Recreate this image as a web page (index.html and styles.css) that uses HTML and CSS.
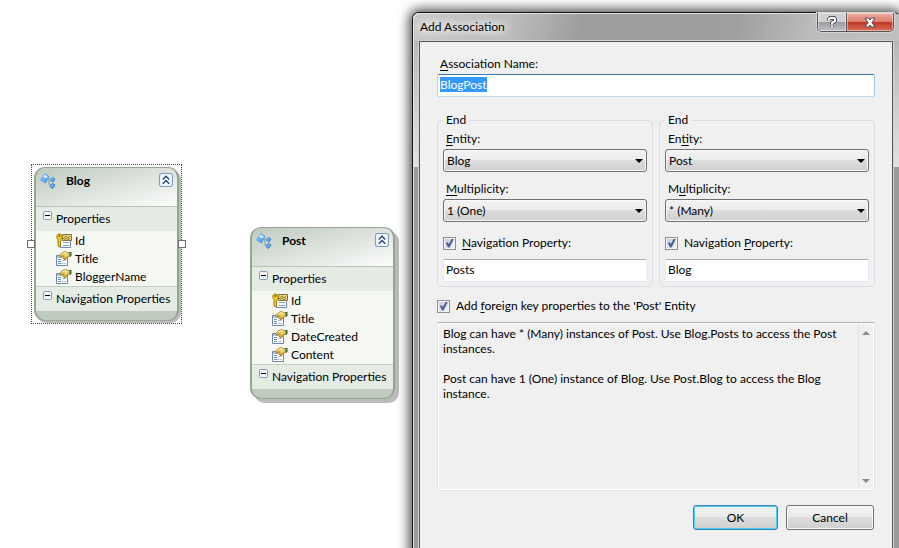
FILE: index.html
```html
<!DOCTYPE html>
<html lang="en">
<head>
<meta charset="utf-8">
<title>Add Association</title>
<link rel="stylesheet" href="styles.css">
</head>
<body>
<svg class="defs" aria-hidden="true">
  <defs>
    <linearGradient id="blue" x1="0" y1="0" x2="1" y2="1">
      <stop offset="0" stop-color="#a8d8ff"/><stop offset="1" stop-color="#2f86e0"/>
    </linearGradient>
    <linearGradient id="gold" x1="0" y1="0" x2="0" y2="1">
      <stop offset="0" stop-color="#fbe58a"/><stop offset="1" stop-color="#c79a1c"/>
    </linearGradient>
  </defs>
  <symbol id="entity" viewBox="0 0 16 16">
    <path d="M7 6h4M9 6v6h2" fill="none" stroke="#8a97a8"/>
    <path d="M5 .5l4 3-3.500 6.500L.5 7z" fill="url(#blue)" stroke="#4f9fee" stroke-width=".8"/>
    <path d="M5 1.500l3 2.500-2 1.500-3-2z" fill="#d3ecff"/>
    <path d="M12.500 4.500l2.500 1.500-2 3-2.500-1.500z" fill="url(#blue)" stroke="#2f7fd0" stroke-width=".9"/>
    <path d="M12.500 10.500l2.500 1.500-2.500 3.500-2.500-2z" fill="url(#blue)" stroke="#2472c4" stroke-width=".9"/>
  </symbol>
  <symbol id="prop" viewBox="0 0 16 16">
    <path d="M.5 4.500h11v10H.5z" fill="#fff" stroke="#7186ac"/>
    <path d="M1 5h5v2H1z" fill="#a9bfe4"/>
    <path d="M2 8.500h3M2 10.500h3M2 12.500h3" stroke="#6c8cc8"/>
    <path d="M6 9.500h4M6 12.500h4" stroke="#b5c1d8"/>
    <path d="M3.500 4.500l3-3 3-1 2 1h3v4h-2l-3 3H8L7 7.500l-1-1 1.500-1.500H6L4.500 6z" fill="url(#gold)" stroke="#866613" stroke-width=".7"/>
    <path d="M6.500 2.500l3-1 1.500 1M9 4l2 1" fill="none" stroke="#fff3b0" stroke-width=".9"/>
    <path d="M13.500 1h2v4h-2z" fill="#3c6b3c"/>
  </symbol>
  <symbol id="key" viewBox="0 0 16 16">
    <path d="M4.500 4.500h10v10h-10z" fill="#fff" stroke="#7186ac"/>
    <path d="M7 9.500h6M7 12.500h6" stroke="#7e9bd0"/>
    <path d="M6.500 1.500h9v6h-9z" fill="#e8d382" stroke="#85743a"/>
    <path d="M7 6l3-3 2 2 2-2M8 7l2-2 2 2 2-2" fill="none" stroke="#8a6812" stroke-width=".8"/>
    <path d="M3.500.8a3 3 0 0 1 1.500 5.500V8L4 9l1 1-1 1 1 1-1.500 2L2 13V6.300A3 3 0 0 1 3.500.8z" fill="#f2cf1d" stroke="#8d6a00" stroke-width=".8"/>
    <circle cx="3.500" cy="3" r=".9" fill="#6a4e00"/>
  </symbol>
  <symbol id="minus" viewBox="0 0 9 9">
    <rect x=".5" y=".5" width="8" height="8" rx="1" fill="#f3f6f8" stroke="#7f9db9"/>
    <path d="M2 4.500h5" stroke="#000"/>
  </symbol>
  <symbol id="chevrons" viewBox="0 0 13 13">
    <rect x=".5" y=".5" width="12" height="12" rx="2" fill="#f4f8fc" stroke="#7b9cc0"/>
    <path d="M3.500 6l3-3 3 3M3.500 10l3-3 3 3" fill="none" stroke="#1c3f78" stroke-width="1.200"/>
  </symbol>
</svg>

<main class="canvas">
  <article class="entity blog selected">
    <div class="card">
      <header><svg class="i16"><use href="#entity"/></svg><h2>Blog</h2><button aria-label="Collapse Blog"><svg><use href="#chevrons"/></svg></button></header>
      <h3><svg><use href="#minus"/></svg>Properties</h3>
      <ul>
        <li><svg class="i16"><use href="#key"/></svg>Id</li>
        <li><svg class="i16"><use href="#prop"/></svg>Title</li>
        <li><svg class="i16"><use href="#prop"/></svg>BloggerName</li>
      </ul>
      <h3 class="nav"><svg><use href="#minus"/></svg>Navigation Properties</h3>
    </div>
    <span class="handle left"></span><span class="handle right"></span>
  </article>

  <article class="entity post">
    <div class="card">
      <header><svg class="i16"><use href="#entity"/></svg><h2>Post</h2><button aria-label="Collapse Post"><svg><use href="#chevrons"/></svg></button></header>
      <h3><svg><use href="#minus"/></svg>Properties</h3>
      <ul>
        <li><svg class="i16"><use href="#key"/></svg>Id</li>
        <li><svg class="i16"><use href="#prop"/></svg>Title</li>
        <li><svg class="i16"><use href="#prop"/></svg>DateCreated</li>
        <li><svg class="i16"><use href="#prop"/></svg>Content</li>
      </ul>
      <h3 class="nav"><svg><use href="#minus"/></svg>Navigation Properties</h3>
    </div>
  </article>

  <section class="dialog" role="dialog" aria-labelledby="dialog-title">
    <header class="titlebar">
      <h1 id="dialog-title">Add Association</h1>
      <div class="caption">
        <button class="help" aria-label="Help"><svg viewBox="0 0 10 12"><path d="M2 4.500V3l1-1h4l1 1v2L5 7v1.200M5 9.200v1.800" fill="none" stroke="#4a4e5c" stroke-width="3.800"/><path d="M2 4.500V3l1-1h4l1 1v2L5 7v1.200M5 9.200v1.800" fill="none" stroke="#fff" stroke-width="2"/></svg></button>
        <button class="close" aria-label="Close"><svg viewBox="0 0 12 11"><path d="M1 1h3.500L6 3l1.500-2H11L8 5.500l3 4.500H7.500L6 8l-1.500 2H1l3-4.500z" fill="#fff" stroke="#4a4658"/></svg></button>
      </div>
    </header>
    <form class="client" onsubmit="return false">
      <label class="caption-text" for="name"><u>A</u>ssociation Name:</label>
      <input class="text focus" id="name" type="text" value="BlogPost" autofocus>

      <div class="ends">
        <fieldset>
          <legend>End</legend>
          <label class="caption-text" for="entity1"><u>E</u>ntity:</label>
          <div class="combo"><select id="entity1"><option>Blog</option><option>Post</option></select></div>
          <label class="caption-text second" for="mult1"><u>M</u>ultiplicity:</label>
          <div class="combo"><select id="mult1"><option>1 (One)</option><option>* (Many)</option></select></div>
          <label class="check"><input type="checkbox" checked><span><u>N</u>avigation Property:</span></label>
          <input class="text" type="text" value="Posts" aria-label="Navigation property name">
        </fieldset>
        <fieldset>
          <legend>End</legend>
          <label class="caption-text" for="entity2">En<u>t</u>ity:</label>
          <div class="combo"><select id="entity2"><option>Post</option><option>Blog</option></select></div>
          <label class="caption-text second" for="mult2">M<u>u</u>ltiplicity:</label>
          <div class="combo"><select id="mult2"><option>* (Many)</option><option>1 (One)</option></select></div>
          <label class="check"><input type="checkbox" checked><span>Navigation <u>P</u>roperty:</span></label>
          <input class="text" type="text" value="Blog" aria-label="Navigation property name">
        </fieldset>
      </div>

      <label class="check foreign"><input type="checkbox" checked><span>Add <u>f</u>oreign key properties to the 'Post' Entity</span></label>

      <div class="summary">
        <textarea readonly aria-label="Summary">Blog can have * (Many) instances of Post. Use Blog.Posts to access the Post instances.

Post can have 1 (One) instance of Blog. Use Post.Blog to access the Blog instance.</textarea>
        <div class="scroll"><button type="button" class="up" aria-label="Scroll up"></button><button type="button" class="down" aria-label="Scroll down"></button></div>
      </div>

      <div class="actions">
        <button class="push default">OK</button>
        <button class="push" type="button">Cancel</button>
      </div>
    </form>
  </section>
</main>
<script>document.getElementById("name").select();</script>
</body>
</html>
```
FILE: styles.css
```css
* { box-sizing: border-box; }

body {
  margin: 0;
  background: #fff;
  color: #000;
  font: 12px/16px Lato, "Open Sans", sans-serif;
}

button, input, select, textarea { font: inherit; color: inherit; margin: 0; }
button { padding: 0; }
h1, h2, h3, ul { margin: 0; padding: 0; font-size: inherit; font-weight: normal; list-style: none; }
svg { display: block; flex: none; }
u { text-underline-offset: 2px; }
.defs { position: absolute; width: 0; height: 0; }
.canvas { position: relative; min-height: 100vh; overflow: hidden; }

/* Entities on the designer surface */
.entity { position: absolute; }
.blog { left: 31px; top: 164px; }
.post { left: 250px; top: 227px; }
.selected { padding: 2px; border: 1px dotted #444; width: 151px; }
.selected .card { box-shadow: 2px 2px 0 #bcbcbc; }
.card {
  width: 145px;
  border: 2px solid #93a690;
  border-width: 1px 2px;
  border-radius: 11px;
  background: #c0cbbf;
  box-shadow: 4px 4px 0 #bcbcbc;
  overflow: hidden;
  padding-bottom: 9px;
}
.card header {
  display: flex;
  align-items: flex-start;
  height: 39px;
  padding: 5px 4px 0 4px;
  border-bottom: 1px solid #b5c3b4;
  background: linear-gradient(165deg, #bfcbbf 0%, #dfe5df 55%, #fcfdfc 100%);
}
.card h2 { flex: 1; padding-left: 10px; font-weight: bold; }
.card header button { border: 0; background: none; }
.card header button svg { width: 14px; height: 14px; }
.i16 { width: 16px; height: 16px; }
.card h3 {
  display: flex;
  gap: 4px;
  height: 24px;
  padding: 4px 0 0 7px;
  background: #e4ece4;
  white-space: nowrap;
}
.card h3 svg { width: 9px; height: 9px; }
.card .nav { height: 25px; border-top: 1px solid #c3cec3; }
.card ul { padding-top: 1px; background: #f4f7f2; }
.card li { display: flex; align-items: center; gap: 3px; height: 18px; padding-left: 20px; }
.handle { position: absolute; top: 75px; width: 8px; height: 8px; border: 1px solid #707070; background: #fff; }
.handle.left { left: -5px; }
.handle.right { right: -5px; }

/* Dialog window */
.dialog {
  position: absolute;
  top: 12px;
  left: 412px;
  right: -1px;
  padding: 0 6px 6px;
  border: 1px solid #111;
  border-right-color: #c8c8c8;
  border-radius: 7px 7px 0 0;
  background:
    linear-gradient(#b8b8b8, #e2e2e2) 0 28px / 100% 126px no-repeat,
    #999;
  box-shadow: inset 1px 1px 0 #e6e6e6, 0 0 12px 3px rgba(0, 0, 0, .7);
}
.titlebar {
  display: flex;
  justify-content: space-between;
  align-items: flex-start;
  height: 28px;
  margin: 0 -6px;
  padding: 0 5px 0 7px;
  border-radius: 6px 6px 0 0;
  background: linear-gradient(105deg, #c9c9c9 0, #bdbdbd 20%, #9d9d9d 35%, #9f9f9f 66%, #bcbcbc 82%, #c0c0c0 100%);
  box-shadow: inset 1px 1px 0 #e6e6e6;
}
.titlebar h1 { padding-top: 6px; text-shadow: 0 0 8px #fff, 0 0 8px #fff, 0 0 12px #fff; }
.caption {
  display: flex;
  border: 1px solid #555;
  border-top: 0;
  border-radius: 0 0 5px 5px;
  box-shadow: 0 0 0 1px #d4d4d4;
  overflow: hidden;
}
.caption button { display: grid; place-items: center; height: 18px; border: 0; box-shadow: inset 0 0 0 1px rgba(255, 255, 255, .45); }
.help { width: 28px; background: linear-gradient(#d0d0d0 50%, #9c9c9c 50%, #c0c0c8); }
.caption .close { width: 47px; border-left: 1px solid #555; background: linear-gradient(#eeb0a4, #d97c6a 50%, #bf3420 50%, #d8705a); }
.help svg { width: 10px; height: 12px; overflow: visible; }
.close svg { width: 12px; height: 11px; }

.client {
  display: flex;
  flex-direction: column;
  padding: 14px 17px 30px;
  border: 1px solid #555;
  background: #f0f0f0;
  box-shadow: 0 0 0 1px #d2d2d2;
}
.caption-text { display: block; padding-left: 3px; margin-bottom: 2px; }
.text {
  display: block;
  width: 100%;
  height: 23px;
  padding: 0 2px 2px;
  border: 1px solid #e3e9ef;
  border-top-color: #abadb3;
  border-radius: 2px;
  background: #fff;
  line-height: 15px;
  outline: 0;
}
.text.focus { border-color: #3d7bad #a4c9e3 #b7d9ed #b5cfe7; }
.text::selection { background: #39f; color: #fff; }

.ends { display: grid; grid-template-columns: 1fr 1fr; gap: 6px; margin-top: 15px; }
fieldset {
  min-width: 0;
  margin: 0;
  padding: 3px 5px 4px;
  border: 1px solid #d5dfe5;
  border-radius: 4px;
}
legend { padding: 0 3px; }
.second { margin-top: 9px; }
.combo { position: relative; }
.combo::after {
  content: "";
  position: absolute;
  top: 10px;
  right: 4px;
  border: 4px solid transparent;
  border-top-color: #000;
  border-bottom: 0;
  pointer-events: none;
}
select {
  display: block;
  width: 100%;
  height: 23px;
  padding: 0 3px;
  appearance: none;
  border: 1px solid #707070;
  border-radius: 3px;
  background: linear-gradient(#f2f2f2, #ebebeb 50%, #ddd 50%, #cfcfcf);
  box-shadow: inset 0 0 0 1px #f8f8f8;
}
.check { display: flex; align-items: center; gap: 6px; margin: 13px 0 8px; }
.check input {
  appearance: none;
  display: grid;
  place-items: center;
  width: 13px;
  height: 13px;
  border: 1px solid #8e8f8f;
  background: linear-gradient(135deg, #c4cad2, #f4f5f6);
  box-shadow: inset 0 0 0 1px #f4f4f4;
}
.check input:checked::before {
  content: "";
  width: 9px;
  height: 9px;
  background: #4a5f97;
  clip-path: polygon(8% 48%, 28% 42%, 42% 62%, 76% 0, 100% 0, 50% 100%, 34% 100%);
}
.foreign { margin: 11px 0 8px; }

.summary {
  display: flex;
  height: 169px;
  border: 1px solid #e0e6ec;
  border-top-color: #abadb3;
  border-radius: 2px;
  box-shadow: inset 0 0 0 1px #fff;
}
textarea {
  flex: 1;
  min-width: 0;
  padding: 3px 5px;
  border: 0;
  background: none;
  line-height: 15px;
  resize: none;
  outline: 0;
  overflow: hidden;
}
.scroll {
  display: flex;
  flex-direction: column;
  justify-content: space-between;
  width: 15px;
  margin: 1px;
  border-left: 1px solid #e2e2e2;
  background: #f0f0f0;
}
.scroll button { display: grid; place-items: center; height: 17px; border: 0; background: none; }
.scroll button::before { content: ""; border: 4px solid transparent; }
.scroll .up::before { border-top: 0; border-bottom-color: #8a8a8a; }
.scroll .down::before { border-bottom: 0; border-top-color: #8a8a8a; }

.actions { display: flex; justify-content: flex-end; gap: 8px; margin: 14px 1px 0 0; }
.push {
  width: 88px;
  height: 25px;
  border: 1px solid #707070;
  border-radius: 3px;
  background: linear-gradient(#f2f2f2, #ebebeb 50%, #ddd 50%, #cfcfcf);
  box-shadow: inset 0 0 0 1px #fafafa;
}
.push.default { width: 85px; border-color: #3c7fb1; box-shadow: inset 0 0 0 1px #48d0f8; }
```
